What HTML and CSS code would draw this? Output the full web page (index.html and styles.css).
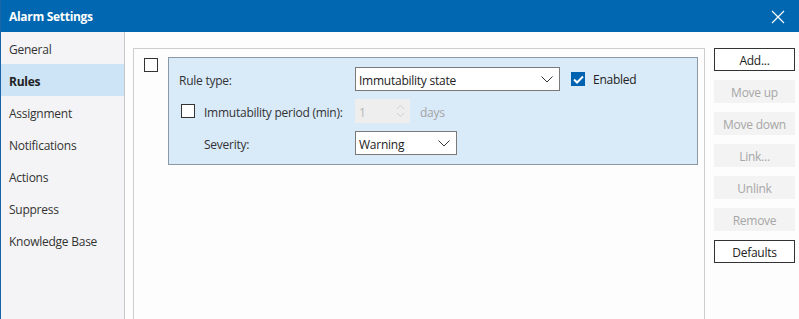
FILE: index.html
```html
<!DOCTYPE html>
<html lang="en">
<head>
    <meta charset="UTF-8">
    <title>Alarm Settings</title>
    <link rel="stylesheet" href="styles.css">
</head>
<body>
    <div class="window">
        <div class="titlebar">
            <span class="title">Alarm Settings</span>
            <svg class="close" width="14" height="14" viewBox="0 0 14 14">
                <path d="M1 1 L13 13 M13 1 L1 13" stroke="#fff" stroke-width="1.2" fill="none"/>
            </svg>
        </div>
        <div class="content">
            <ul class="sidebar">
                <li>General</li>
                <li class="active">Rules</li>
                <li>Assignment</li>
                <li>Notifications</li>
                <li>Actions</li>
                <li>Suppress</li>
                <li>Knowledge Base</li>
            </ul>
            <div class="main">
                <div class="panel">
                    <span class="check"></span>
                    <div class="rule">
                        <div class="label"><span class="txt">Rule type:</span></div>
                        <div class="field">
                            <div class="select wide">
                                <span class="txt">Immutability state</span>
                                <svg width="12" height="7" viewBox="0 0 12 7"><path d="M0.5 0.5 L6 6 L11.5 0.5" stroke="#333" fill="none"/></svg>
                            </div>
                            <span class="check checked">
                                <svg width="11" height="9" viewBox="0 0 11 9"><path d="M1 4.5 L4 7.5 L10 1.5" stroke="#fff" stroke-width="2" fill="none"/></svg>
                            </span>
                            <span class="enabled">Enabled</span>
                        </div>

                        <div class="label"><span class="check"></span><span class="txt">Immutability period (min):</span></div>
                        <div class="field">
                            <div class="spinner">
                                <span class="txt">1</span>
                                <svg width="9" height="16" viewBox="0 0 9 16"><path d="M1 6 L4.5 2.5 L8 6 M1 10 L4.5 13.5 L8 10" stroke="#d0d0d0" fill="none"/></svg>
                            </div>
                            <span class="days txt">days</span>
                        </div>

                        <div class="label indent"><span class="txt">Severity:</span></div>
                        <div class="field">
                            <div class="select narrow">
                                <span class="txt">Warning</span>
                                <svg width="12" height="7" viewBox="0 0 12 7"><path d="M0.5 0.5 L6 6 L11.5 0.5" stroke="#333" fill="none"/></svg>
                            </div>
                        </div>
                    </div>
                </div>
                <div class="buttons">
                    <button>Add...</button>
                    <button disabled>Move up</button>
                    <button disabled>Move down</button>
                    <button disabled>Link...</button>
                    <button disabled>Unlink</button>
                    <button disabled>Remove</button>
                    <button>Defaults</button>
                </div>
            </div>
        </div>
    </div>
</body>
</html>
```

FILE: styles.css
```css
body {
    margin: 0;
    width: 799px;
    height: 319px;
    overflow: hidden;
    font-family: "Open Sans", "Noto Sans", sans-serif;
    font-size: 12px;
    letter-spacing: -0.25px;
    color: #222;
    background-color: #fdfdfd;
}
.window {
    height: 319px;
    display: flex;
    flex-direction: column;
    border-left: 1px solid #1a64a8;
    box-sizing: border-box;
}
.titlebar {
    height: 32px;
    background-color: #0067b0;
    display: flex;
    align-items: center;
    justify-content: space-between;
    padding: 1px 14px 0 8px;
    box-sizing: border-box;
    flex-shrink: 0;
}
.title {
    color: white;
    font-weight: bold;
    font-size: 12px;
    letter-spacing: -0.3px;
}
.content {
    flex: 1;
    display: flex;
}
.sidebar {
    list-style: none;
    margin: 0;
    padding: 0;
    width: 123px;
    background-color: #f4f4f6;
    border-right: 1px solid #c6c6c6;
}
.sidebar li {
    height: 30px;
    line-height: 32px;
    padding: 2px 0 0 8px;
    color: #333;
}
.sidebar li.active {
    background-color: #cde4f7;
    font-weight: bold;
    color: #222;
}
.txt {
    padding-top: 2px;
}
.main {
    flex: 1;
    display: flex;
    padding: 16px 0 0 8px;
}
.panel {
    width: 572px;
    border: 1px solid #cdcdcd;
    border-bottom: none;
    display: flex;
    align-items: flex-start;
    padding: 8px 0 0 10px;
    box-sizing: border-box;
    background-color: #fdfdfe;
}
.check {
    display: inline-flex;
    align-items: center;
    justify-content: center;
    width: 12px;
    height: 12px;
    border: 1px solid #333;
    background-color: white;
    flex-shrink: 0;
}
.panel > .check {
    margin-top: 1px;
}
.check.checked {
    background-color: #0063b1;
    border-color: #0063b1;
}
.rule {
    margin-left: 10px;
    width: 530px;
    height: 108px;
    box-sizing: border-box;
    background-color: #d9eaf9;
    border: 1px solid #8c98a4;
    padding: 9px 0 0 10px;
    display: grid;
    grid-template-columns: 176px auto;
    grid-template-rows: 24px 24px 24px;
    row-gap: 8px;
}
.label {
    display: flex;
    align-items: center;
    color: #333;
}
.label .check {
    margin: 0 9px 0 2px;
}
.label.indent {
    padding-left: 25px;
}
.field {
    display: flex;
    align-items: center;
}
.select {
    height: 24px;
    box-sizing: border-box;
    border: 1px solid #7a7a7a;
    background-color: white;
    display: flex;
    align-items: center;
    justify-content: space-between;
    padding: 0 6px 0 3px;
    color: #222;
}
.select.wide {
    width: 205px;
}
.select.narrow {
    width: 102px;
}
.field .check.checked {
    margin-left: 11px;
}
.enabled {
    margin-left: 8px;
}
.spinner {
    width: 55px;
    height: 24px;
    box-sizing: border-box;
    background-color: #eeeeee;
    display: flex;
    align-items: center;
    justify-content: space-between;
    padding: 0 5px 0 4px;
    color: #b4b4b4;
}
.days {
    margin-left: 10px;
    color: #a4a4a4;
}
.buttons {
    display: flex;
    flex-direction: column;
    gap: 9px;
    margin-left: 9px;
}
button {
    width: 81px;
    height: 23px;
    font-family: "Open Sans", "Noto Sans", sans-serif;
    font-size: 12px;
    letter-spacing: -0.25px;
    background-color: white;
    border: 1px solid #333;
    color: #222;
    padding: 2px 0 0 0;
}
button:disabled {
    background-color: #f3f3f3;
    border-color: #f3f3f3;
    color: #a6a6a6;
}
```
